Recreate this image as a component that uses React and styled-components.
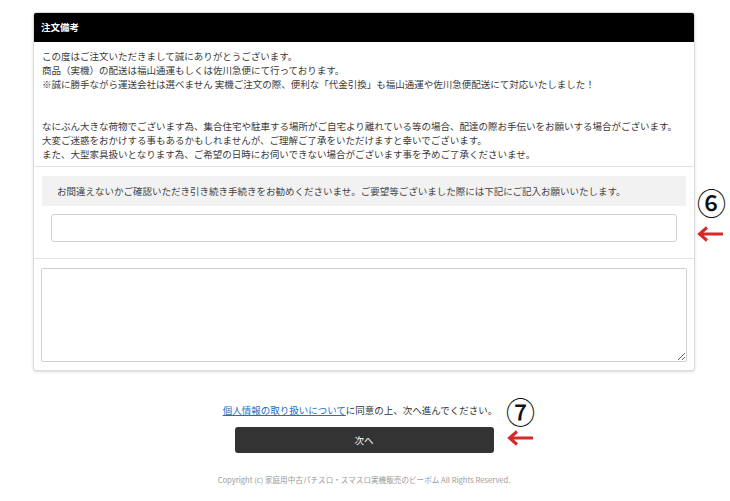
import styled, { createGlobalStyle } from "styled-components";

const GlobalStyle = createGlobalStyle`
  body {
    margin: 0;
    background: #fff;
    font-family: "Noto Sans CJK JP", "Noto Sans", sans-serif;
    color: #333;
  }
`;

const Page = styled.div`
  position: relative;
  width: 730px;
  padding: 12px 0 20px 33px;
  box-sizing: border-box;
`;

const Inner = styled.div`
  width: 662px;
`;

const Card = styled.section`
  border: 1px solid #dcdcdc;
  border-radius: 3px;
  box-shadow: 0 1px 3px rgba(0, 0, 0, 0.15);
  background: #fff;
`;

const CardHead = styled.h2`
  margin: 0;
  height: 29px;
  line-height: 29px;
  padding: 0 7px;
  background: #000;
  color: #fff;
  font-size: 9.5px;
  font-weight: 700;
  border-radius: 2px 2px 0 0;
`;

const Notice = styled.div`
  padding: 7px 8px 5px;
  font-size: 9.5px;
  line-height: 14px;
  color: #3a3a3a;
`;

const Section = styled.div`
  border-top: 1px solid #e2e2e2;
  padding: ${(p) => p.$pad};
  display: flex;
  flex-direction: column;
  gap: ${(p) => p.$gap || "0px"};
`;

const Hint = styled.p`
  margin: 0;
  height: 30px;
  line-height: 30px;
  background: #f2f2f2;
  padding: 0 15px;
  font-size: 9.5px;
  color: #444;
`;

const FieldWrap = styled.div`
  padding: 0 9px;
`;

const TextInput = styled.input`
  display: block;
  width: 100%;
  height: 28px;
  box-sizing: border-box;
  border: 1px solid #d0d0d0;
  border-radius: 3px;
  background: #fff;
  outline: none;
`;

const TextArea = styled.textarea`
  display: block;
  width: 100%;
  height: 94px;
  box-sizing: border-box;
  border: 1px solid #d0d0d0;
  border-radius: 2px;
  background: #fff;
  outline: none;
  margin: 0;
`;

const Footer = styled.div`
  margin-top: 32px;
  display: flex;
  flex-direction: column;
  align-items: center;
`;

const Consent = styled.p`
  margin: 0 8px 0 0;
  font-size: 9.5px;
  line-height: 14px;
  color: #333;
`;

const Link = styled.a`
  color: #2a6ebb;
  text-decoration: underline;
`;

const NextButton = styled.button`
  margin-top: 10px;
  width: 259px;
  height: 26px;
  border: none;
  border-radius: 3px;
  background: #333;
  color: #fff;
  font-family: "Noto Sans CJK JP", sans-serif;
  font-size: 9.5px;
  cursor: pointer;
`;

const Copyright = styled.p`
  margin: 22px 0 0;
  font-size: 7.6px;
  line-height: 10px;
  color: #9a9a9a;
`;

const Mark = styled.span`
  position: absolute;
  left: ${(p) => p.$x}px;
  top: ${(p) => p.$y}px;
  font-family: "Noto Sans CJK JP", sans-serif;
  font-size: 29px;
  font-weight: 500;
  line-height: 29px;
  color: #111;
`;

const ArrowBox = styled.span`
  position: absolute;
  left: ${(p) => p.$x}px;
  top: ${(p) => p.$y}px;
  width: 26px;
  height: 16px;
  display: block;
`;

const Arrow = ({ x, y }) => (
  <ArrowBox $x={x} $y={y}>
    <svg width="26" height="16" viewBox="0 0 26 16">
      <path
        d="M26 8H3M10 1.5L2.5 8L10 14.5"
        fill="none"
        stroke="#d42a2a"
        strokeWidth="3"
      />
    </svg>
  </ArrowBox>
);

export default function App() {
  return (
    <>
      <GlobalStyle />
      <Page>
        <Inner>
          <Card>
            <CardHead>注文備考</CardHead>
            <Notice>
              この度はご注文いただきまして誠にありがとうございます。
              <br />
              商品（実機）の配送は福山通運もしくは佐川急便にて行っております。
              <br />
              ※誠に勝手ながら運送会社は選べません 実機ご注文の際、便利な「代金引換」も福山通運や佐川急便配送にて対応いたしました！
              <br />
              <br />
              <br />
              なにぶん大きな荷物でございます為、集合住宅や駐車する場所がご自宅より離れている等の場合、配達の際お手伝いをお願いする場合がございます。
              <br />
              大変ご迷惑をおかけする事もあるかもしれませんが、ご理解ご了承をいただけますと幸いでございます。
              <br />
              また、大型家具扱いとなります為、ご希望の日時にお伺いできない場合がございます事を予めご了承くださいませ。
            </Notice>
            <Section $pad="9px 8px 16px" $gap="8px">
              <Hint>
                お間違えないかご確認いただき引き続き手続きをお勧めくださいませ。ご要望等ございました際には下記にご記入お願いいたします。
              </Hint>
              <FieldWrap>
                <TextInput type="text" />
              </FieldWrap>
            </Section>
            <Section $pad="9px 7px 8px 7px">
              <TextArea />
            </Section>
          </Card>
          <Footer>
            <Consent>
              <Link href="#">個人情報の取り扱いについて</Link>
              に同意の上、次へ進んでください。
            </Consent>
            <NextButton type="button">次へ</NextButton>
            <Copyright>
              Copyright (c) 家庭用中古パチスロ・スマスロ実機販売のビーボム All Rights Reserved.
            </Copyright>
          </Footer>
        </Inner>
        <Mark $x={697} $y={188}>⑥</Mark>
        <Arrow x={697} y={223} />
        <Mark $x={506} $y={397}>⑦</Mark>
        <Arrow x={507} y={427} />
      </Page>
    </>
  );
}
